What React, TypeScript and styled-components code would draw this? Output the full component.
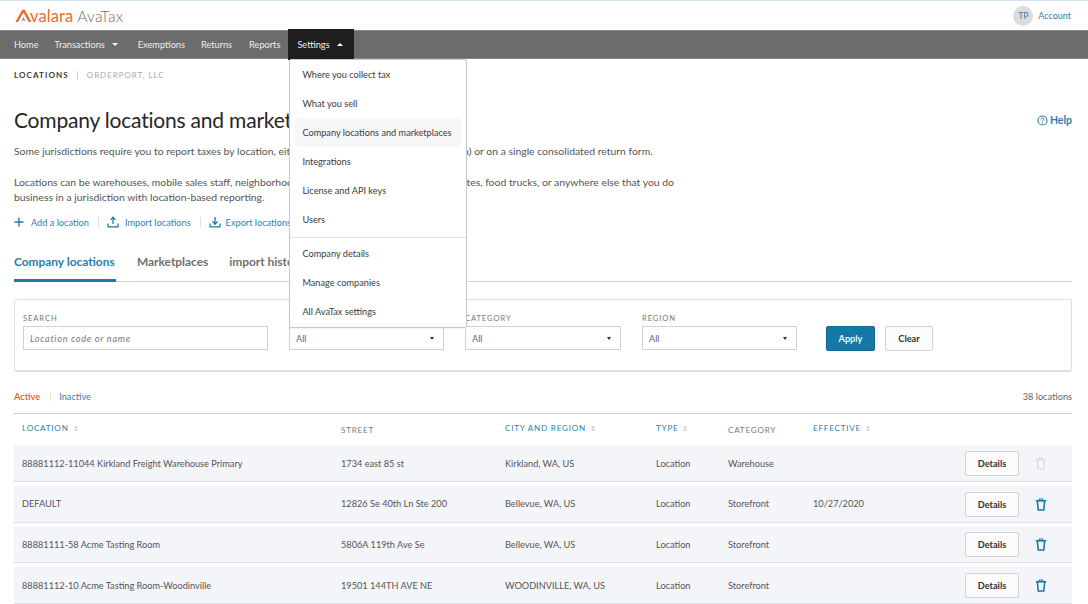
import React from "react";
import styled, { createGlobalStyle } from "styled-components";

const Global = createGlobalStyle`
  html, body { margin: 0; padding: 0; background: #fff; }
  body { font-family: "Lato", "Noto Sans", sans-serif; color: #4a4a4a; width: 1088px; height: 604px; overflow: hidden; }
  * { box-sizing: border-box; }
`;

const Page = styled.div`
  width: 1088px; height: 604px; overflow: hidden; border-top: 1px solid #d3e3f0; position: relative;
`;
const Header = styled.header`
  height: 29px; display: flex; align-items: center; justify-content: space-between; padding: 0 17px 0 15px;
`;
const Logo = styled.div`display: flex; align-items: center; height: 29px;`;
const LogoName = styled.span`
  font-size: 16.5px; color: #f26a2b; letter-spacing: 0.1px; margin-left: -2px;
`;
const LogoProduct = styled.span`
  font-size: 15.5px; color: #6e6e6e; margin-left: 4px; letter-spacing: 0.2px; font-weight: 300;
`;
const AccountWrap = styled.div`display: flex; align-items: center; gap: 5px;`;
const Avatar = styled.div`
  width: 20px; height: 20px; border-radius: 50%; background: #dcdcdc; color: #2f7fa8; font-size: 8.5px;
  display: flex; align-items: center; justify-content: center;
`;
const AccountLink = styled.span`font-size: 9px; color: #2f7fa8;`;

const Nav = styled.nav`
  height: 29px; background: #6c6c6c; display: flex; align-items: center; padding-left: 14px;
  border-top: 1px solid #8a8a8a; border-bottom: 1px solid #8a8a8a;
`;
const NavItem = styled.div<{ $gap: number }>`
  font-size: 9.2px; color: #eeeeee; margin-right: ${p => p.$gap}px; display: flex; align-items: center; white-space: nowrap;
`;
const NavCaret = styled.span<{ $up?: boolean }>`
  display: inline-block; margin-left: 7px; width: 0; height: 0; border-left: 3px solid transparent; border-right: 3px solid transparent;
  ${p => p.$up ? "border-bottom: 3.5px solid #fff;" : "border-top: 3.5px solid #f2f2f2;"}
`;
const SettingsTab = styled.div`
  position: relative; align-self: stretch; margin: -2px 0 -1px -9px; width: 66px; background: #1f1f1f; color: #eeeeee; font-size: 9.2px;
  display: flex; align-items: center; padding-left: 9px; height: 31px;
`;
const Menu = styled.div`
  position: absolute; left: 1px; top: 30px; width: 178px; height: 269px; background: #fff; border: 1px solid #c9c9c9; border-radius: 2px;
  z-index: 5; box-shadow: 0 1px 2px rgba(0,0,0,.06);
`;
const MenuItem = styled.div<{ $active?: boolean }>`
  height: 29px; margin: 0 5px; padding-left: 7px; display: flex; align-items: center; font-size: 9.2px; color: #3c3c3c; white-space: nowrap;
  border-radius: 2px; background: ${p => p.$active ? "#f7f7f7" : "transparent"};
`;
const MenuRule = styled.div`height: 1px; background: #e2e2e2; margin: 3px 0 1px;`;

const Main = styled.main`padding: 0 16px 0 14px;`;
const Crumbs = styled.div`
  height: 32px; display: flex; align-items: center; font-size: 8px; letter-spacing: 1.1px; text-transform: uppercase;
`;
const CrumbStrong = styled.span`color: #3a3a3a; font-weight: 700;`;
const CrumbSep = styled.span`width: 1px; height: 9px; background: #d0d0d0; margin: 0 9px 0 8px;`;
const CrumbLight = styled.span`color: #a9a9a9; letter-spacing: 0.95px;`;

const TitleRow = styled.div`
  margin-top: 13px; height: 30px; display: flex; align-items: center; justify-content: space-between;
`;
const Title = styled.h1`
  margin: 0; font-size: 21px; font-weight: 400; color: #262626; white-space: nowrap; letter-spacing: -0.2px;
`;
const Help = styled.span`
  font-size: 10.5px; font-weight: 700; color: #2f7fa8; display: flex; align-items: center; gap: 2px; margin-top: 2px;
`;
const Para = styled.p<{ $mt?: number }>`
  margin: ${p => p.$mt ?? 0}px 0 0; font-size: 10.4px; line-height: 15px; color: #555; white-space: nowrap;
`;
const Actions = styled.div`display: flex; align-items: center; height: 16px; margin-top: 9px; font-size: 9.2px; color: #2f7fa8;`;
const ActionLink = styled.span<{ $gap: number }>`display: flex; align-items: center; gap: ${p => p.$gap}px; white-space: nowrap;`;
const ActionSep = styled.span`width: 1px; height: 10px; background: #ddd; margin: 0 8px 0 9px;`;

const Tabs = styled.div`
  margin-top: 16px; height: 36px; display: flex; border-bottom: 1px solid #d6d6d6; gap: 21px;
`;
const TabItem = styled.div<{ $active?: boolean }>`
  height: 36px; padding-top: 8px; font-size: 11.9px; font-weight: 700; white-space: nowrap;
  color: ${p => p.$active ? "#2a7ba6" : "#6f6f6f"};
  ${p => p.$active ? "border-bottom: 3px solid #1b7aa6; width: 102px;" : ""}
`;

const FilterBox = styled.section`
  margin-top: 17px; height: 73px; border: 1px solid #dedede; border-bottom-width: 2px; border-radius: 3px; padding: 13px 8px 0;
  display: flex; align-items: flex-start;
`;
const Field = styled.div<{ $w: number; $mr: number }>`width: ${p => p.$w}px; margin-right: ${p => p.$mr}px; flex: none;`;
const FieldLabel = styled.div`font-size: 7.6px; letter-spacing: 0.9px; color: #7a7a7a; height: 10px; line-height: 10px; text-transform: uppercase;`;
const TextBox = styled.div`
  margin-top: 3px; height: 24px; border: 1px solid #d2d2d2; display: flex; align-items: center; padding-left: 6px;
  font-size: 9.2px; font-style: italic; color: #777; letter-spacing: 0.7px; background: #fff;
`;
const SelectBox = styled.div`
  margin-top: 3px; height: 24px; border: 1px solid #d2d2d2; display: flex; align-items: center; justify-content: space-between; padding: 0 9px 0 6px;
  font-size: 9.2px; color: #666; background: #fff;
`;
const SelectCaret = styled.span`width: 0; height: 0; border-left: 2.5px solid transparent; border-right: 2.5px solid transparent; border-top: 3px solid #333;`;
const ApplyButton = styled.div`
  margin: 13px 0 0 0; width: 49px; height: 25px; background: #1678a5; border: 1px solid #0f6a94; border-radius: 2px; color: #f0f6fa; font-size: 9.2px; font-weight: 700;
  display: flex; align-items: center; justify-content: center; flex: none;
`;
const ClearButton = styled.div`
  margin: 13px 0 0 10px; width: 48px; height: 25px; background: #fbfbfb; border: 1px solid #d4d4d4; border-radius: 2px; color: #333; font-size: 9.2px; font-weight: 700;
  display: flex; align-items: center; justify-content: center; flex: none;
`;

const StatusRow = styled.div`
  margin-top: 17px; height: 15px; display: flex; align-items: center; font-size: 9.2px;
`;
const StatusActive = styled.span`color: #f26a22; font-weight: 700;`;
const StatusSep = styled.span`width: 1px; height: 9px; background: #e2e2e2; margin: 0 8px 0 10px;`;
const StatusInactive = styled.span`color: #2f7fa8;`;
const Count = styled.span`margin-left: auto; color: #666;`;

const columns = "319px 164px 151px 72px 85px 152px 54px 1fr";
const TableHead = styled.div`
  margin-top: 9px; height: 32px; border-top: 1px solid #cfcfcf; display: grid; grid-template-columns: ${columns}; padding-left: 8px; align-items: center;
`;
const HeadCell = styled.div<{ $sort?: boolean }>`
  font-size: 8.2px; letter-spacing: 0.72px; text-transform: uppercase; white-space: nowrap; display: flex; align-items: center; gap: 5px;
  color: ${p => p.$sort ? "#2f7fa8" : "#7a7a7a"};
  margin-top: ${p => p.$sort ? -3 : 1}px;
`;
const SortMark = styled.span`
  display: inline-flex; flex-direction: column; gap: 1px;
  &::before { content: ""; border-left: 2px solid transparent; border-right: 2px solid transparent; border-bottom: 2px solid #c4c4c4; }
  &::after { content: ""; border-left: 2px solid transparent; border-right: 2px solid transparent; border-top: 2px solid #c4c4c4; }
`;
const Row = styled.div`
  height: 37px; margin-bottom: 3.7px; background: #f3f5f9; border-bottom: 1px solid #dcdfe3; display: grid; grid-template-columns: ${columns}; padding-left: 8px; align-items: center;
`;
const Cell = styled.div`font-size: 9.2px; color: #555; white-space: nowrap;`;
const DetailsButton = styled.div`
  width: 54px; height: 25px; background: #fbfbfb; border: 1px solid #d4d4d4; border-radius: 2px; color: #333; font-size: 9.2px; font-weight: 700;
  display: flex; align-items: center; justify-content: center; margin-top: 1px;
`;
const TrashCell = styled.div`display: flex; justify-content: flex-start; padding-left: 16px; margin-top: 1px;`;

const AvalaraMark = () => (
  <svg width="17" height="14" viewBox="0 0 17 14" aria-hidden="true">
    <path d="M0.4 13 L7.2 0.8 L9.6 0.8 L16.4 13 L13.6 13 L8.4 3.6 L3 13 Z" fill="#f26a2b" />
    <path d="M6.4 12.8 L8.6 8.2 L10.8 12.8 L8.6 10.8 Z" fill="#2a84b5" />
  </svg>
);
const HelpIcon = () => (
  <svg width="11" height="11" viewBox="0 0 11 11" aria-hidden="true">
    <circle cx="5.5" cy="5.5" r="4.5" fill="none" stroke="#2f7fa8" strokeWidth="1.1" />
    <path d="M4 4.4 C4 3.4 4.7 3 5.5 3 C6.3 3 7 3.5 7 4.3 C7 5.3 5.5 5.3 5.5 6.4" fill="none" stroke="#2f7fa8" strokeWidth="1" />
    <circle cx="5.5" cy="7.9" r=".6" fill="#2f7fa8" />
  </svg>
);
const PlusIcon = () => (
  <svg width="10" height="10" viewBox="0 0 10 10" aria-hidden="true">
    <path d="M5 0.5 V9.5 M0.5 5 H9.5" stroke="#1b7aa6" strokeWidth="1.3" fill="none" />
  </svg>
);
const UploadIcon = () => (
  <svg width="12" height="12" viewBox="0 0 12 12" aria-hidden="true">
    <path d="M6 8 V1.5 M3.6 3.8 L6 1.2 L8.4 3.8" stroke="#1b7aa6" strokeWidth="1.2" fill="none" />
    <path d="M1 7.5 V10.8 H11 V7.5" stroke="#1b7aa6" strokeWidth="1.2" fill="none" />
  </svg>
);
const DownloadIcon = () => (
  <svg width="12" height="12" viewBox="0 0 12 12" aria-hidden="true">
    <path d="M6 1 V7.8 M3.4 5.4 L6 8.2 L8.6 5.4" stroke="#1b7aa6" strokeWidth="1.3" fill="none" />
    <path d="M1 7.5 V10.8 H11 V7.5" stroke="#1b7aa6" strokeWidth="1.2" fill="none" />
  </svg>
);
const TrashIcon = ({ muted }: { muted?: boolean }) => {
  const c = muted ? "#d4d6d8" : "#15759f";
  return (
    <svg width="12" height="13" viewBox="0 0 12 13" aria-hidden="true">
      <path d="M0.8 2.8 H11.2" stroke={c} strokeWidth={muted ? 1 : 1.5} fill="none" />
      <path d="M4.2 2.6 V1 H7.8 V2.6" stroke={c} strokeWidth={1} fill="none" />
      <path d="M2.4 3 L3.2 12 H8.8 L9.6 3" stroke={c} strokeWidth={muted ? 1 : 1.5} fill="none" />
    </svg>
  );
};

const rows = [
  ["88881112-11044 Kirkland Freight Warehouse Primary", "1734 east 85 st", "Kirkland, WA, US", "Location", "Warehouse", "", true],
  ["DEFAULT", "12826 Se 40th Ln Ste 200", "Bellevue, WA, US", "Location", "Storefront", "10/27/2020", false],
  ["88881111-58 Acme Tasting Room", "5806A 119th Ave Se", "Bellevue, WA, US", "Location", "Storefront", "", false],
  ["88881112-10 Acme Tasting Room-Woodinville", "19501 144TH AVE NE", "WOODINVILLE, WA, US", "Location", "Storefront", "", false],
] as const;

export default function App() {
  return (
    <Page>
      <Global />
      <Header>
        <Logo>
          <AvalaraMark />
          <LogoName>valara</LogoName>
          <LogoProduct>AvaTax</LogoProduct>
        </Logo>
        <AccountWrap>
          <Avatar>TP</Avatar>
          <AccountLink>Account</AccountLink>
        </AccountWrap>
      </Header>
      <Nav>
        <NavItem $gap={16}>Home</NavItem>
        <NavItem $gap={20}>Transactions<NavCaret /></NavItem>
        <NavItem $gap={16}>Exemptions</NavItem>
        <NavItem $gap={17}>Returns</NavItem>
        <NavItem $gap={17}>Reports</NavItem>
        <SettingsTab>
          Settings<NavCaret $up />
          <Menu>
            <MenuItem>Where you collect tax</MenuItem>
            <MenuItem>What you sell</MenuItem>
            <MenuItem $active>Company locations and marketplaces</MenuItem>
            <MenuItem>Integrations</MenuItem>
            <MenuItem>License and API keys</MenuItem>
            <MenuItem>Users</MenuItem>
            <MenuRule />
            <MenuItem>Company details</MenuItem>
            <MenuItem>Manage companies</MenuItem>
            <MenuItem>All AvaTax settings</MenuItem>
          </Menu>
        </SettingsTab>
      </Nav>
      <Main>
        <Crumbs>
          <CrumbStrong>Locations</CrumbStrong>
          <CrumbSep />
          <CrumbLight>Orderport, LLC</CrumbLight>
        </Crumbs>
        <TitleRow>
          <Title>Company locations and marketplaces</Title>
          <Help><HelpIcon />Help</Help>
        </TitleRow>
        <Para $mt={10}>Some jurisdictions require you to report taxes by location, either on separate forms (one per location) or on a single consolidated return form.</Para>
        <Para $mt={16}>Locations can be warehouses, mobile sales staff, neighborhood pop-up shops, local craft fairs, websites, food trucks, or anywhere else that you do</Para>
        <Para>business in a jurisdiction with location-based reporting.</Para>
        <Actions>
          <ActionLink $gap={7}><PlusIcon />Add a location</ActionLink>
          <ActionSep />
          <ActionLink $gap={6}><UploadIcon />Import locations</ActionLink>
          <ActionSep />
          <ActionLink $gap={5}><DownloadIcon />Export locations</ActionLink>
        </Actions>
        <Tabs>
          <TabItem $active>Company locations</TabItem>
          <TabItem>Marketplaces</TabItem>
          <TabItem>import history</TabItem>
        </Tabs>
        <FilterBox>
          <Field $w={245} $mr={21}>
            <FieldLabel>Search</FieldLabel>
            <TextBox>Location code or name</TextBox>
          </Field>
          <Field $w={155} $mr={21}>
            <FieldLabel>Type</FieldLabel>
            <SelectBox>All<SelectCaret /></SelectBox>
          </Field>
          <Field $w={156} $mr={21}>
            <FieldLabel>Category</FieldLabel>
            <SelectBox>All<SelectCaret /></SelectBox>
          </Field>
          <Field $w={155} $mr={29}>
            <FieldLabel>Region</FieldLabel>
            <SelectBox>All<SelectCaret /></SelectBox>
          </Field>
          <ApplyButton>Apply</ApplyButton>
          <ClearButton>Clear</ClearButton>
        </FilterBox>
        <StatusRow>
          <StatusActive>Active</StatusActive>
          <StatusSep />
          <StatusInactive>Inactive</StatusInactive>
          <Count>38 locations</Count>
        </StatusRow>
        <TableHead>
          <HeadCell $sort>Location<SortMark /></HeadCell>
          <HeadCell>Street</HeadCell>
          <HeadCell $sort>City and region<SortMark /></HeadCell>
          <HeadCell $sort>Type<SortMark /></HeadCell>
          <HeadCell>Category</HeadCell>
          <HeadCell $sort>Effective<SortMark /></HeadCell>
        </TableHead>
        {rows.map((r) => (
          <Row key={r[0]}>
            <Cell>{r[0]}</Cell>
            <Cell>{r[1]}</Cell>
            <Cell>{r[2]}</Cell>
            <Cell>{r[3]}</Cell>
            <Cell>{r[4]}</Cell>
            <Cell>{r[5]}</Cell>
            <DetailsButton>Details</DetailsButton>
            <TrashCell><TrashIcon muted={r[6]} /></TrashCell>
          </Row>
        ))}
      </Main>
    </Page>
  );
}
